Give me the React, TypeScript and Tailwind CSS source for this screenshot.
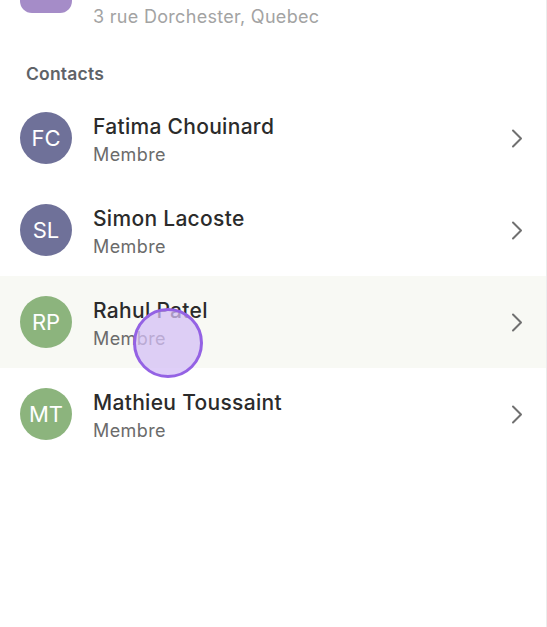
import React from "react";

const contacts = [
  { initials: "FC", name: "Fatima Chouinard", color: "bg-[#6f7199]", active: false },
  { initials: "SL", name: "Simon Lacoste", color: "bg-[#6f7199]", active: false },
  { initials: "RP", name: "Rahul Patel", color: "bg-[#8cb47d]", active: true },
  { initials: "MT", name: "Mathieu Toussaint", color: "bg-[#8cb47d]", active: false },
];

function Chevron() {
  return (
    <svg width="12" height="19" viewBox="0 0 12 19" fill="none" className="shrink-0">
      <path d="M2 1.5 L10 9.5 L2 17.5" stroke="#707070" strokeWidth="2" strokeLinecap="round" strokeLinejoin="round" />
    </svg>
  );
}

export default function App() {
  return (
    <div
      className="relative w-[547px] h-[627px] overflow-hidden bg-white border-r border-[#ececec]"
      style={{ fontFamily: "Inter, 'Noto Sans', sans-serif" }}
    >
      <div className="flex h-[40px] px-5 gap-[21px]">
        <div className="w-[52px] h-[52px] -mt-[39px] rounded-[12px] bg-[#a58cc8] shrink-0" />
        <div className="pt-[5px] text-[18px] leading-[24px] tracking-[0.3px] text-[#a3a3a3]">3 rue Dorchester, Quebec</div>
      </div>
      <div className="px-[26px] pt-[22px] pb-[6px] text-[17.5px] leading-[24px] font-semibold tracking-[0.2px] text-[#5f6368]">
        Contacts
      </div>
      <div className="flex flex-col">
        {contacts.map((c) => (
          <div
            key={c.initials}
            className={`flex items-center h-[92px] pl-5 pr-[23px] gap-[21px] ${c.active ? "bg-[#f8f9f4]" : ""}`}
          >
            <div
              className={`w-[52px] h-[52px] rounded-full ${c.color} flex items-center justify-center text-white text-[22px] shrink-0`}
            >
              {c.initials}
            </div>
            <div className="flex-1 flex flex-col mt-[6px]">
              <div className="text-[21px] leading-[28px] font-medium tracking-[0.3px] text-[#2b2b2b]">{c.name}</div>
              <div className="text-[18px] leading-[28px] tracking-[0.4px] text-[#6b6b6b]">Membre</div>
            </div>
            <Chevron />
          </div>
        ))}
      </div>
      <div className="absolute left-[133px] top-[308px] w-[70px] h-[70px] rounded-full bg-[#d4bff5]/75 border-[3px] border-[#9462e4]" />
    </div>
  );
}
